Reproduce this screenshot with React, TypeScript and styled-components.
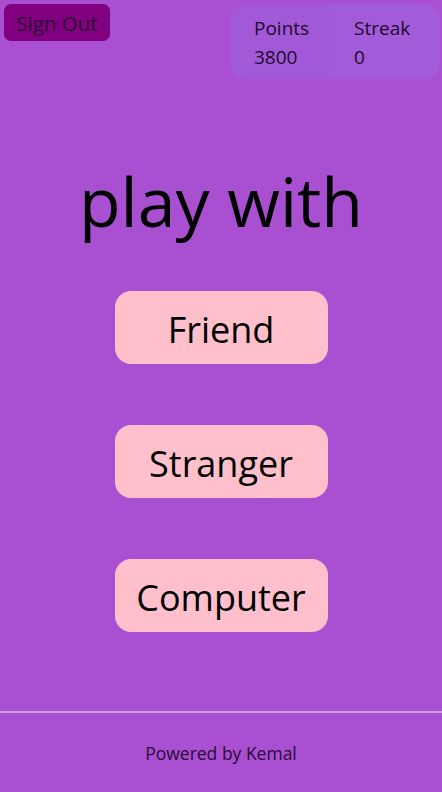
import React from 'react'
import styled, { createGlobalStyle } from 'styled-components';

const GlobalStyle = createGlobalStyle`
  html, body {
    margin: 0;
    padding: 0;
    background: #a94fd2;
  }
  body {
    font-family: "Open Sans", "Noto Sans", sans-serif;
  }
`;

const Page = styled.div`
  width: 442px;
  height: 792px;
  display: flex;
  flex-direction: column;
  background: #a94fd2;
  color: #000;
`;

const TopBar = styled.div`
  display: flex;
  justify-content: space-between;
  align-items: flex-start;
  padding: 4px 2px 0 4px;
  height: 75px;
`;

const SignOutButton = styled.button`
  width: 106px;
  height: 37px;
  border: none;
  border-radius: 7px;
  background: #800080;
  color: #2b0a30;
  font-family: "Open Sans", sans-serif;
  font-size: 20.5px;
  padding: 0;
  cursor: pointer;
`;

const Stats = styled.div`
  display: flex;
  width: 210px;
  height: 75px;
  border-radius: 16px;
  background: rgba(150, 110, 230, 0.35);
  overflow: hidden;
`;

const StatCell = styled.div<{ $width?: number; $shade?: boolean }>`
  flex: ${(p) => (p.$width ? `0 0 ${p.$width}px` : '1')};
  display: flex;
  flex-direction: column;
  justify-content: center;
  padding: 2px 0 0 24px;
  box-sizing: border-box;
  background: ${(p) => (p.$shade ? 'rgba(170, 110, 230, 0.15)' : 'transparent')};
  color: #1e0a2a;
  font-size: 19px;
  line-height: 29px;
`;

const Main = styled.main`
  flex: 1;
  display: flex;
  flex-direction: column;
  align-items: center;
`;

const Title = styled.h1`
  margin: 77px 0 45px;
  font-family: "Open Sans", sans-serif;
  font-weight: 400;
  font-size: 68px;
  line-height: 90px;
  color: #000;
`;

const ChoiceList = styled.div`
  display: flex;
  flex-direction: column;
  gap: 61px;
`;

const ChoiceButton = styled.button`
  width: 213px;
  height: 73px;
  border: none;
  border-radius: 16px;
  background: #ffc0cb;
  color: #000;
  font-family: "Open Sans", sans-serif;
  font-size: 36px;
  padding: 4px 0 0;
  cursor: pointer;
`;

const Footer = styled.footer`
  height: 79px;
  border-top: 2px solid #c79ce0;
  display: flex;
  align-items: center;
  justify-content: center;
  font-size: 17.5px;
  color: #2a0a35;
`;

function App() {
  return (
    <Page>
      <GlobalStyle />
      <TopBar>
        <SignOutButton>Sign Out</SignOutButton>
        <Stats>
          <StatCell $width={100}>
            <span>Points</span>
            <span>3800</span>
          </StatCell>
          <StatCell $shade>
            <span>Streak</span>
            <span>0</span>
          </StatCell>
        </Stats>
      </TopBar>
      <Main>
        <Title>play with</Title>
        <ChoiceList>
          <ChoiceButton>Friend</ChoiceButton>
          <ChoiceButton>Stranger</ChoiceButton>
          <ChoiceButton>Computer</ChoiceButton>
        </ChoiceList>
      </Main>
      <Footer>Powered by Kemal</Footer>
    </Page>
  )
}

export default App
